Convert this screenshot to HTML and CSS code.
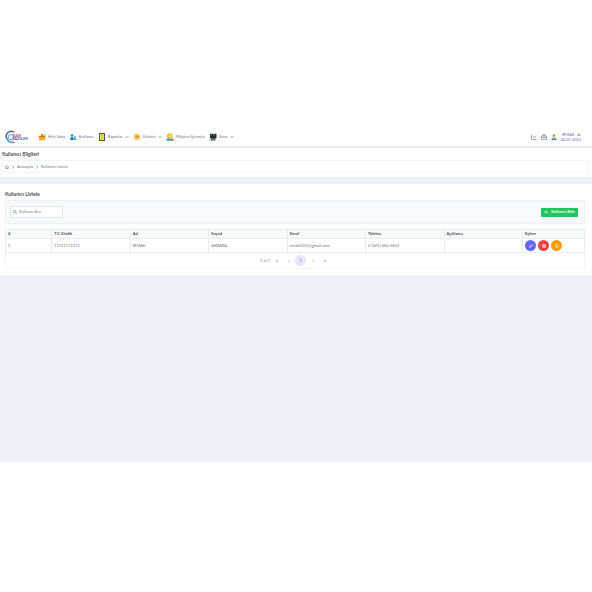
FILE: index.html
```html
<!DOCTYPE html>
<html lang="tr">
<head>
    <meta charset="UTF-8">
    <meta name="viewport" content="width=device-width, initial-scale=1.0">
    <title>Kullanıcı Bilgileri</title>
    <link rel="stylesheet" href="styles.css">
</head>
<body>
<div class="app">
    <header class="topbar">
        <a href="#" class="logo" aria-label="Ana sayfa">
            <svg viewBox="0 0 24 14" width="24" height="14">
                <path d="M9 2.2A5 5 0 0 0 2 9" fill="none" stroke="#4a5fa8" stroke-width="1.5"/>
                <path d="M2 8A5 5 0 0 0 9 12" fill="none" stroke="#38a8dc" stroke-width="1.6"/>
                <path d="M5 12.6h5" stroke="#d85a82" stroke-width=".8"/>
                <circle cx="6" cy="7" r="2.6" fill="none" stroke="#85a9d2" stroke-width="1.2"/>
                <text x="8" y="6.5" class="logo-red">SAN</text>
                <text x="7" y="10" class="logo-blue">YAZILIM</text>
            </svg>
        </a>
        <nav class="menu">
            <a href="#">
                <svg viewBox="0 0 8 8" width="8" height="8"><path d="M.5 2.6l2 .4L3 1l1.5 1.7L7 1l.5 2L7 7.2H1.2z" fill="#f0ae1d"/><path d="M1 3.5h6" stroke="#cc5a28" stroke-width=".8"/><path d="M3 1h2v1.5H3z" fill="#5ba55b"/></svg>
                <span>Hızlı Satış</span>
            </a>
            <a href="#">
                <svg viewBox="0 0 8 8" width="8" height="8"><circle cx="3" cy="2.4" r="1.4" fill="#2d9bd1"/><path d="M1 7c0-4 4-4 4 0z" fill="#1680bd"/><circle cx="5.8" cy="4" r="1" fill="#48b5df"/><path d="M4.5 7c0-3 3-3 3 0z" fill="#48b5df"/></svg>
                <span>Kullanıcı</span>
            </a>
            <a href="#">
                <svg viewBox="0 0 8 8" width="8" height="8"><path d="M1 0h6v8H1z" fill="#405463"/><path d="M2 1h4v6H2z" fill="#eee05c"/><path d="M3 2.5h2M3 4h2M3 5.5h2" stroke="#b5a431" stroke-width=".6"/></svg>
                <span>Raporlar</span>
                <svg class="caret" viewBox="0 0 4 4" width="4" height="4"><path d="M.4 1L2 2.8 3.6 1"/></svg>
            </a>
            <a href="#">
                <svg viewBox="0 0 8 8" width="8" height="8"><circle cx="4" cy="4" r="3.3" fill="#f4ca63"/><circle cx="4" cy="3.8" r="1.5" fill="#e6a029"/><path d="M1 5.8h6" stroke="#dbd5c5" stroke-width=".8"/></svg>
                <span>Ürünler</span>
                <svg class="caret" viewBox="0 0 4 4" width="4" height="4"><path d="M.4 1L2 2.8 3.6 1"/></svg>
            </a>
            <a href="#">
                <svg viewBox="0 0 8 8" width="8" height="8"><circle cx="3.8" cy="3" r="2.8" fill="#eeb52c"/><circle cx="4.2" cy="3" r="1.2" fill="#fff0ad"/><path d="M.2 7.8c0-3.4 4.2-3.2 4.2 0z" fill="#2d9bd8"/><path d="M3.5 7.8c0-3.2 4.2-3 4.2 0z" fill="#48a96b"/><path d="M5.5 5.8h2v1.6h-2z" fill="#d96541"/></svg>
                <span>Müşteri İşlemleri</span>
            </a>
            <a href="#">
                <svg viewBox="0 0 8 8" width="8" height="8"><path d="M1 .8h6.5v4.4H1z" fill="#222831"/><path d="M2 2h1M4 2h2" stroke="#aeb8c2" stroke-width=".6"/><path d="M2 5h4.5v2.5H2z" fill="#59616a"/><path d="M0 5.5h2v2H0z" fill="#b8c2cb"/></svg>
                <span>Kasa</span>
                <svg class="caret" viewBox="0 0 4 4" width="4" height="4"><path d="M.4 1L2 2.8 3.6 1"/></svg>
            </a>
        </nav>
        <div class="user-tools">
            <a href="#" aria-label="Grafik">
                <svg class="line-icon" viewBox="0 0 6 6" width="6" height="6"><path d="M.5.5v5h5.2M1.5 3.7L3 2.5l1 .8L5.5 2"/></svg>
            </a>
            <a href="#" aria-label="Kasa">
                <svg class="line-icon" viewBox="0 0 6 6" width="6" height="6"><path d="M.4 2h5.2v3.4H.4zM2 2V.6h2V2M.4 3.5h5.2"/></svg>
            </a>
            <a href="#" aria-label="Profil">
                <svg viewBox="0 0 6 6" width="6" height="6"><path d="M.4 5.9c0-2.8 5.2-2.8 5.2 0z" fill="#2b91b8"/><circle cx="3" cy="2" r="1.6" fill="#f1bb62"/><path d="M1.5 1.5C1.7 0 4.3 0 4.5 1.5z" fill="#a77535"/><path d="M2.3 3.5h1.4v1.2H2.3z" fill="#f1bb62"/></svg>
            </a>
            <div class="user-name"><span>IRMAK&nbsp;&nbsp; A.</span><span>04.07.2023</span></div>
        </div>
    </header>

    <section class="page-head">
        <h1>Kullanıcı Bilgileri</h1>
        <nav class="breadcrumb">
            <a href="#" aria-label="Ana sayfa"><svg class="line-icon" viewBox="0 0 4 4" width="4" height="4"><path d="M.3 2L2 .5 3.7 2M.8 1.8v1.8h2.4V1.8M2 2.5v1"/></svg></a>
            <svg class="sep" viewBox="0 0 4 4" width="4" height="4"><path d="M1.3.4L2.8 2 1.3 3.6"/></svg>
            <a href="#">Anasayfa</a>
            <svg class="sep" viewBox="0 0 4 4" width="4" height="4"><path d="M1.3.4L2.8 2 1.3 3.6"/></svg>
            <a href="#">Kullanıcı Listele</a>
        </nav>
    </section>

    <main class="card">
        <h2>Kullanıcı Listele</h2>
        <div class="toolbar">
            <label class="search">
                <svg class="line-icon" viewBox="0 0 4 4" width="4" height="4"><circle cx="1.7" cy="1.7" r="1.3"/><path d="M2.7 2.7l1.1 1.1"/></svg>
                <input type="text" placeholder="Kullanıcı Ara" aria-label="Kullanıcı Ara">
            </label>
            <button class="add-btn" type="button">
                <svg viewBox="0 0 4 4" width="4" height="4"><path d="M2 .4v3.2M.4 2h3.2"/></svg>
                <span>Kullanıcı Ekle</span>
            </button>
        </div>
        <table class="users">
            <thead>
                <tr>
                    <th class="col-no">#</th>
                    <th>T.C Kimlik</th>
                    <th>Ad</th>
                    <th>Soyad</th>
                    <th>Email</th>
                    <th>Telefon</th>
                    <th>Açıklama</th>
                    <th class="col-action">Eylem</th>
                </tr>
            </thead>
            <tbody>
                <tr>
                    <td>1</td>
                    <td>11111111111</td>
                    <td>IRMAK</td>
                    <td>AKBABA</td>
                    <td>irmak0033@gmail.com</td>
                    <td>0 (541) 465-0622</td>
                    <td></td>
                    <td class="actions">
                        <div>
                            <button class="edit" type="button" aria-label="Düzenle"><svg viewBox="0 0 4 4" width="4" height="4"><path d="M.5 3.5l.3-1.1L2.7.5l.8.8-1.9 1.9z"/></svg></button>
                            <button class="delete" type="button" aria-label="Sil"><svg viewBox="0 0 4 4" width="4" height="4"><path d="M.3 1h3.4M.8 1v2.6h2.4V1M1.4 1V.4h1.2V1M1.6 1.6v1.3M2.4 1.6v1.3"/></svg></button>
                            <button class="reset" type="button" aria-label="Yenile"><svg viewBox="0 0 4 4" width="4" height="4"><path d="M1 1a1.5 1.5 0 1 0 2 0M1 1V.2M1 1h.9"/></svg></button>
                        </div>
                    </td>
                </tr>
            </tbody>
        </table>
        <div class="paginator">
            <span>1 of 1</span>
            <button type="button" aria-label="İlk"><svg viewBox="0 0 4 4" width="4" height="4"><path d="M2 .7L.8 2 2 3.3M3.3.7L2.1 2l1.2 1.3"/></svg></button>
            <button type="button" aria-label="Önceki"><svg viewBox="0 0 4 4" width="4" height="4"><path d="M2.6.7L1.4 2l1.2 1.3"/></svg></button>
            <button class="current" type="button">1</button>
            <button type="button" aria-label="Sonraki"><svg viewBox="0 0 4 4" width="4" height="4"><path d="M1.4.7L2.6 2 1.4 3.3"/></svg></button>
            <button type="button" aria-label="Son"><svg viewBox="0 0 4 4" width="4" height="4"><path d="M.7.7L1.9 2 .7 3.3M2 .7L3.2 2 2 3.3"/></svg></button>
        </div>
    </main>
</div>
</body>
</html>
```

FILE: styles.css
```css
:root {
    --bg: #edf1f7;
    --border: #e9ecef;
    --text: #495057;
    --muted: #6f767d;
    --primary: #6366f1;
    --green: #22c55e;
    --red: #ef4444;
    --orange: #f59e0b;
}

* {
    box-sizing: border-box;
}

body {
    margin: 0;
    min-height: 100vh;
    padding: 128px 0 130px;
    display: flex;
    flex-direction: column;
    background: #fff;
    color: var(--text);
    font-family: Lato, "Noto Sans", sans-serif;
    font-size: 4px;
    line-height: 6px;
}

a {
    color: inherit;
    text-decoration: none;
}

button {
    border: 0;
    padding: 0;
    font: inherit;
    background: none;
    display: flex;
    align-items: center;
    justify-content: center;
}

svg {
    display: block;
    flex: none;
}

.line-icon,
.caret,
.sep,
button svg {
    fill: none;
    stroke: #6c757d;
    stroke-width: 0.6;
}

.app {
    flex: 1;
    background: var(--bg);
}

/* --- Top bar --- */
.topbar {
    display: flex;
    align-items: center;
    height: 20px;
    padding: 0 11px 0 5px;
    background: #fff;
    border-bottom: 2px solid #e8eaee;
}

.logo-red,
.logo-blue {
    font-size: 4px;
    font-weight: 700;
    fill: #c24f73;
}

.logo-blue {
    fill: #4056a1;
}

.menu {
    display: flex;
    gap: 4px;
    margin-left: 9px;
    color: var(--muted);
}

.menu a {
    display: flex;
    align-items: center;
    gap: 2px;
    white-space: nowrap;
}

.user-tools {
    display: flex;
    align-items: center;
    gap: 4px;
    margin-left: auto;
}

.user-name {
    display: flex;
    flex-direction: column;
    align-items: flex-end;
    color: #6668b4;
    line-height: 5px;
}

/* --- Title and breadcrumb --- */
.page-head {
    padding: 3px 3px 4px 1px;
    background: #fff;
}

h1,
h2 {
    margin: 0;
    font-size: 5px;
    font-weight: 700;
    line-height: 7px;
}

h1 {
    margin: 0 0 2px 1px;
}

.breadcrumb {
    display: flex;
    align-items: center;
    gap: 2px;
    height: 13px;
    padding: 0 3px;
    border: 1px solid #f3f4f6;
    border-radius: 2px;
    color: #6c757d;
}

/* --- List --- */
.card {
    margin-top: 7px;
    padding: 7px 7px 6px 5px;
    background: #fff;
}

.toolbar {
    display: flex;
    align-items: center;
    justify-content: space-between;
    height: 24px;
    margin: 2px 0 5px;
    padding: 0 6px 0 4px;
    background: #f8f9fa;
    border: 1px solid #f0f2f4;
}

.search {
    display: flex;
    align-items: center;
    gap: 2px;
    width: 53px;
    height: 12px;
    padding: 0 2px;
    background: #fff;
    border: 1px solid #e2e5e9;
    border-radius: 1px;
}

.search input {
    min-width: 0;
    flex: 1;
    border: 0;
    padding: 0;
    font: inherit;
    background: none;
    outline: none;
}

.search input::placeholder {
    color: #7d848b;
}

.add-btn {
    gap: 3px;
    width: 37px;
    height: 9px;
    border-radius: 1px;
    background: var(--green);
    color: #fff;
    font-weight: 700;
    white-space: nowrap;
}

.add-btn svg,
.actions svg {
    stroke: #fff;
}

.users {
    width: 100%;
    table-layout: fixed;
    border-collapse: collapse;
}

.users th,
.users td {
    padding: 0 2px;
    border: 1px solid var(--border);
    text-align: left;
    white-space: nowrap;
}

.users th {
    height: 9px;
    background: #f8f9fa;
    font-weight: 700;
}

.users td {
    height: 14px;
    color: #6c757d;
}

.users .col-no {
    width: 8%;
}

.users .col-action {
    width: 62px;
}

.actions div {
    display: flex;
    gap: 2px;
}

.actions button {
    width: 11px;
    height: 11px;
    border-radius: 50%;
}

.edit {
    background: var(--primary);
}

.delete {
    background: var(--red);
}

.reset {
    background: var(--orange);
}

.paginator {
    display: flex;
    align-items: center;
    justify-content: center;
    gap: 1px;
    height: 16px;
    border: 1px solid #f3f4f6;
    border-top: 0;
    color: #7d848b;
}

.paginator button {
    width: 11px;
    height: 11px;
    border-radius: 50%;
    color: #6366a1;
}

.paginator svg {
    stroke: #a3a9af;
}

.paginator .current {
    background: #e4e7fd;
}
```
